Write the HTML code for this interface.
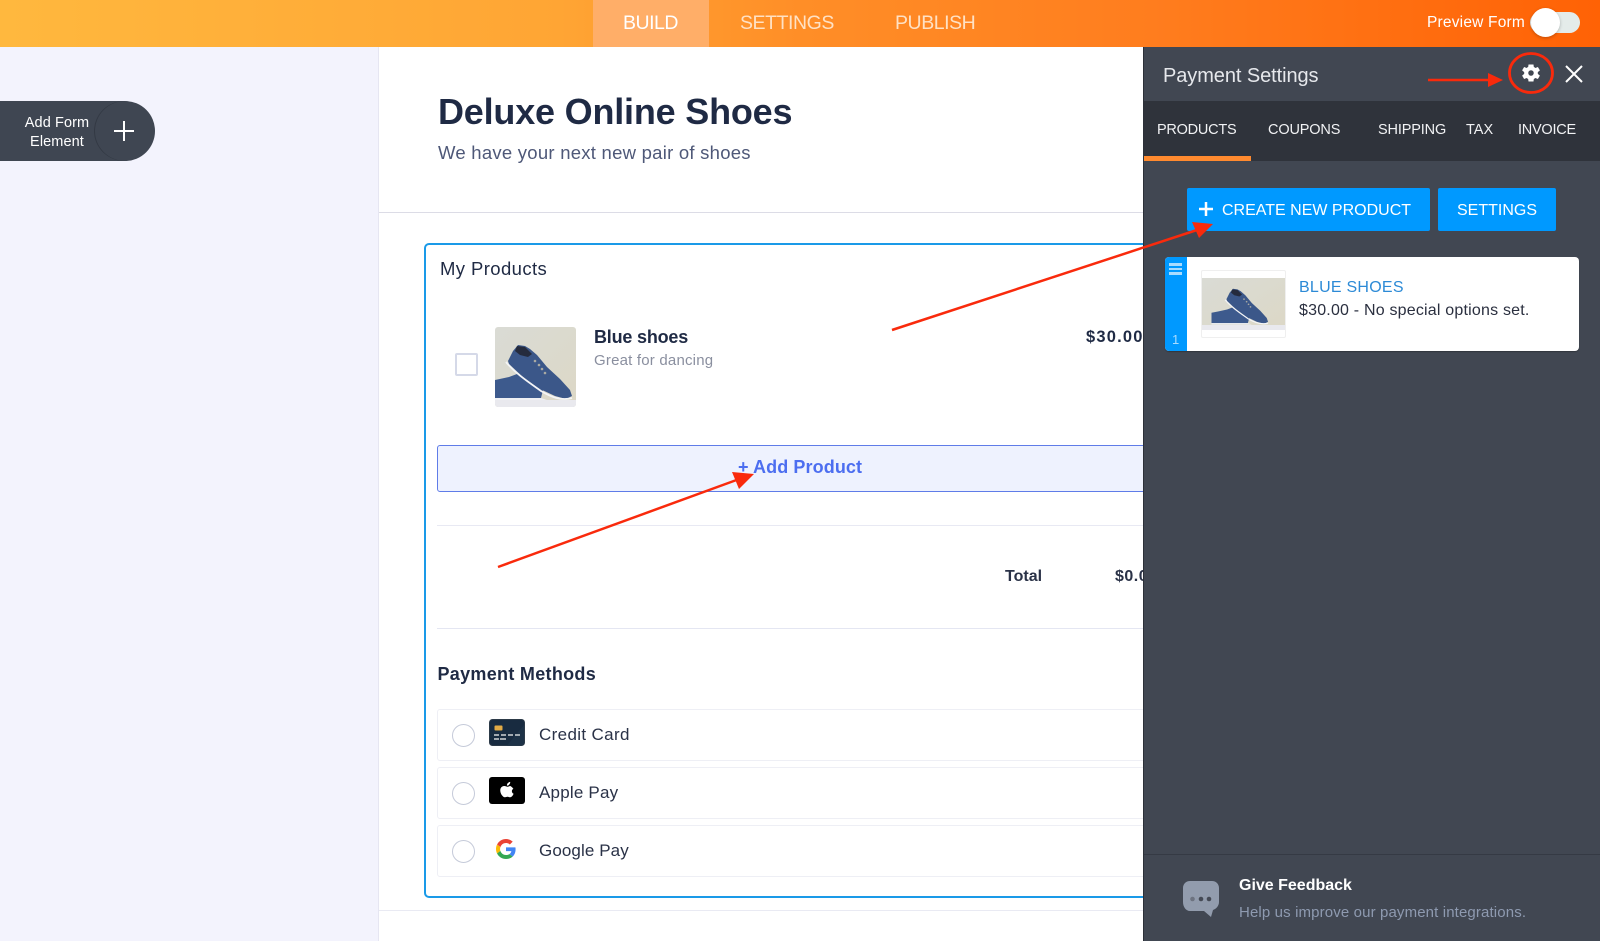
<!DOCTYPE html>
<html lang="en">
<head>
<meta charset="utf-8">
<title>Payment Settings</title>
<style>
html,body{margin:0;padding:0;width:1600px;height:941px;overflow:hidden;background:#f3f3fd;font-family:"Liberation Sans",sans-serif}
#page{position:relative;width:1600px;height:941px;overflow:hidden}
.a{position:absolute}
.t{position:absolute;white-space:nowrap;line-height:1}
svg{position:absolute;display:block}
</style>
</head>
<body>
<div id="page">
<svg width="0" height="0" style="position:absolute">
  <defs>
    <linearGradient id="wall" x1="0" y1="0" x2="1" y2="1"><stop offset="0" stop-color="#dadbd5"/><stop offset="1" stop-color="#dcd8c6"/></linearGradient>
    <g id="shoes">
      <path d="M-10 55 0 53 14 50 22 47 48 63 46 71-10 71Z" fill="#3d5a8d"/>
      <path d="M-10 71H46L52 73H-10Z" fill="#eef0f4"/>
      <path d="M13 34 18 24 23 18 30 19 35 22 42 28 52 40 65 52 75 63 77 69 71 72 60 69 45 62 30 52 14 37Z" fill="#3b5789"/>
      <path d="M22 19 30 20 37 27 33 30 25 28 20 24Z" fill="#252b3d"/>
      <path d="M11 35C20 46 32 54 46 64 56 70 66 74 77 71" fill="none" stroke="#f4f5f7" stroke-width="1.800"/>
      <g fill="#a9a9a3"><circle cx="40" cy="34" r="1.300"/><circle cx="44" cy="38" r="1.300"/><circle cx="47" cy="42" r="1.300"/><circle cx="50" cy="46" r="1.300"/></g>
    </g>
  </defs>
</svg>

<!-- top bar -->
<div class="a" style="left:0;top:0;width:1600px;height:47px;background:linear-gradient(90deg,#ffb83e 0%,#ffa534 35%,#ff8e27 50%,#ff7d1e 72%,#ff6205 100%)"></div>
<div class="a" style="left:593px;top:0;width:116px;height:47px;background:#ffae68"></div>
<div class="t" style="left:623px;top:14px;font-size:19.5px;color:#fff;letter-spacing:-.5px">BUILD</div>
<div class="t" style="left:740px;top:14px;font-size:19.5px;color:#ffe1c4;letter-spacing:-.45px">SETTINGS</div>
<div class="t" style="left:895px;top:14px;font-size:19.5px;color:#ffe1c4;letter-spacing:-.45px">PUBLISH</div>
<div class="t" style="left:1427px;top:15px;font-size:15.5px;color:#fff;letter-spacing:.2px">Preview Form</div>
<div class="a" style="left:1530px;top:12px;width:50px;height:21px;border-radius:11px;background:#e4ecea"></div>
<div class="a" style="left:1531px;top:8px;width:29px;height:29px;border-radius:50%;background:#fff;box-shadow:0 1px 3px rgba(0,0,0,.25)"></div>

<!-- left rail -->
<div class="a" style="left:0;top:101px;width:155px;height:60px;background:#3f4652;border-radius:0 30px 30px 0"></div>
<div class="a" style="left:94px;top:101px;width:61px;height:60px;border-radius:50%;box-shadow:inset 1px 0 0 #333944"></div>
<div class="t" style="left:0;top:114px;width:114px;text-align:center;font-size:14.5px;line-height:18.500px;color:#fff;letter-spacing:.1px">Add Form<br>Element</div>
<svg style="left:113px;top:120px" width="22" height="22" viewBox="0 0 22 22"><path d="M11 1V21M1 11H21" stroke="#fff" stroke-width="2"/></svg>

<!-- form sheet -->
<div class="a" style="left:379px;top:47px;width:770px;height:894px;background:#fff;box-shadow:-1px 0 0 #e6e6f2"></div>
<div class="t" style="left:438px;top:94px;font-size:36px;font-weight:bold;color:#1f2a44;letter-spacing:-.2px">Deluxe Online Shoes</div>
<div class="t" style="left:438px;top:144px;font-size:18.5px;color:#4e5878;letter-spacing:.25px">We have your next new pair of shoes</div>
<div class="a" style="left:379px;top:212px;width:770px;height:1px;background:#dcdce6"></div>

<div class="a" style="left:424px;top:243px;width:800px;height:655px;box-sizing:border-box;border:2px solid #1a9ae8;border-radius:5px"></div>
<div class="t" style="left:440px;top:260px;font-size:18.500px;color:#1f2a44;letter-spacing:.4px">My Products</div>

<div class="a" style="left:455px;top:353px;width:23px;height:23px;box-sizing:border-box;border:2px solid #d5d9e8;border-radius:2px"></div>
<svg style="left:495px;top:327px;border-radius:3px" width="81" height="80" viewBox="0 0 81 80">
  <rect width="81" height="80" fill="url(#wall)"/><rect y="73" width="81" height="7" fill="#e9e9ee"/><use href="#shoes"/>
</svg>
<div class="t" style="left:594px;top:328px;font-size:18px;font-weight:bold;color:#1f2a44;letter-spacing:-.2px">Blue shoes</div>
<div class="t" style="left:594px;top:353px;font-size:15px;color:#8a8f9f;letter-spacing:.2px">Great for dancing</div>
<div class="t" style="left:1086px;top:329px;font-size:16.5px;font-weight:bold;color:#1f2a44;letter-spacing:1.2px">$30.00</div>

<div class="a" style="left:437px;top:445px;width:800px;height:47px;box-sizing:border-box;background:#eef2fe;border:1px solid #5f7ce8;border-radius:3px"></div>
<div class="t" style="left:738px;top:458px;font-size:18px;font-weight:bold;color:#4c6ef0;letter-spacing:.1px">+ Add Product</div>

<div class="a" style="left:437px;top:525px;width:720px;height:1px;background:#e8e9f3"></div>
<div class="t" style="left:1005px;top:569px;font-size:16px;font-weight:bold;color:#2a3247">Total</div>
<div class="t" style="left:1115px;top:569px;font-size:16px;font-weight:bold;color:#2a3247;letter-spacing:.5px">$0.00</div>
<div class="a" style="left:437px;top:628px;width:720px;height:1px;background:#e4e6f2"></div>
<div class="t" style="left:437.500px;top:665px;font-size:18px;font-weight:bold;color:#1f2a44;letter-spacing:.3px">Payment Methods</div>

<div class="a" style="left:437px;top:709px;width:760px;height:52px;box-sizing:border-box;border:1px solid #eeeff5;border-radius:3px"></div>
<div class="a" style="left:437px;top:767px;width:760px;height:52px;box-sizing:border-box;border:1px solid #eeeff5;border-radius:3px"></div>
<div class="a" style="left:437px;top:825px;width:760px;height:52px;box-sizing:border-box;border:1px solid #eeeff5;border-radius:3px"></div>
<div class="a" style="left:451.500px;top:724px;width:23px;height:23px;box-sizing:border-box;border:1.500px solid #c5cad9;border-radius:50%"></div>
<div class="a" style="left:451.500px;top:782px;width:23px;height:23px;box-sizing:border-box;border:1.500px solid #c5cad9;border-radius:50%"></div>
<div class="a" style="left:451.500px;top:840px;width:23px;height:23px;box-sizing:border-box;border:1.500px solid #c5cad9;border-radius:50%"></div>

<svg style="left:489px;top:719px" width="36" height="27" viewBox="0 0 36 27">
  <rect x=".5" y=".5" width="35" height="26" rx="3" fill="#182b40" stroke="#2c3a48"/>
  <path d="M18 26.500 35 6V23.500a3 3 0 0 1-3 3Z" fill="#1d3247"/>
  <rect x="5.500" y="6.500" width="8" height="5" rx="1" fill="#e2ab46"/>
  <path d="M5 16H10M12 16H17M19 16H24M26 16H31" stroke="#cfd3d6" stroke-width="1.500"/>
  <path d="M5 20H10M11 20H17" stroke="#cfd3d6" stroke-width="1.500"/>
</svg>
<svg style="left:489px;top:777px" width="36" height="27" viewBox="0 0 36 27">
  <rect width="36" height="27" rx="3" fill="#000"/>
  <path d="M20.300 7.500c.8-.9 1-1.800.9-2.600-1 .1-1.900.6-2.500 1.400-.6.700-.9 1.600-.7 2.300 1 .1 1.700-.4 2.300-1.100Z" fill="#fff"/>
  <path d="M21.800 9c-1.400-.1-2.500.8-3.300.8-.8 0-1.900-.8-3.100-.8-1.600 0-3.200 1-3.800 2.400-1 2.600.3 5.900 1.900 7.500.8.900 1.500 1.500 2.500 1.400s1.300-.5 2.500-.5 1.500.5 2.600.5 1.800-.9 2.500-1.700c.6-.8.9-1.500 1-1.800-1.900-.8-2.600-3.500-.2-5-.9-1.200-2.300-2.700-3.600-2.800Z" fill="#fff"/>
</svg>
<svg style="left:496px;top:839px" width="20" height="20" viewBox="0 0 48 48">
  <path fill="#EA4335" d="M24 9.500c3.500 0 6.700 1.200 9.200 3.600l6.900-6.900C35.900 2.400 30.500 0 24 0 14.600 0 6.500 5.400 2.600 13.200l8 6.200C12.400 13.700 17.700 9.500 24 9.500z"/>
  <path fill="#4285F4" d="M47 24.500c0-1.600-.1-3.100-.4-4.500H24v9h12.900c-.6 3-2.200 5.500-4.700 7.200l7.700 6C44.400 38.100 47 31.900 47 24.500z"/>
  <path fill="#FBBC05" d="M10.500 28.600c-.5-1.500-.8-3-.8-4.600s.3-3.200.8-4.600l-8-6.200C.9 16.500 0 20.100 0 24s.9 7.500 2.600 10.800l7.900-6.200z"/>
  <path fill="#34A853" d="M24 48c6.500 0 11.900-2.100 15.900-5.800l-7.700-6c-2.100 1.400-4.900 2.300-8.200 2.300-6.300 0-11.600-4.200-13.500-9.900l-8 6.200C6.500 42.600 14.600 48 24 48z"/>
</svg>
<div class="t" style="left:539px;top:726px;font-size:17px;color:#2a3247;letter-spacing:.35px">Credit Card</div>
<div class="t" style="left:539px;top:784px;font-size:17px;color:#2a3247;letter-spacing:.2px">Apple Pay</div>
<div class="t" style="left:539px;top:842px;font-size:17px;color:#2a3247;letter-spacing:.1px">Google Pay</div>
<div class="a" style="left:379px;top:910px;width:770px;height:1px;background:#e9eaf3"></div>

<!-- right panel -->
<div class="a" style="left:1144px;top:47px;width:456px;height:894px;background:#414752;box-shadow:-1px 0 0 #2c3038"></div>
<div class="t" style="left:1163px;top:66px;font-size:20px;color:#e6e8ec;letter-spacing:-.08px">Payment Settings</div>
<svg style="left:1520px;top:62px" width="22" height="22" viewBox="0 0 24 24"><path fill="#fff" fill-rule="evenodd" d="M19.400 13a7.500 7.500 0 0 0 0-2l2.300-1.800-2.200-3.800-2.700 1.100a7.500 7.500 0 0 0-1.700-1L14.700 2.700H9.300l-.4 2.800a7.500 7.500 0 0 0-1.700 1L4.500 5.400 2.300 9.200 4.600 11a7.500 7.500 0 0 0 0 2l-2.300 1.800 2.200 3.800 2.700-1.100c.5.400 1.100.7 1.700 1l.4 2.800h5.400l.4-2.800c.6-.3 1.200-.6 1.700-1l2.700 1.100 2.200-3.800ZM12 15a3 3 0 1 1 0-6 3 3 0 0 1 0 6Z"/></svg>
<svg style="left:1564px;top:64px" width="20" height="20" viewBox="0 0 20 20"><path d="M2 2 18 18M18 2 2 18" stroke="#fff" stroke-width="2"/></svg>

<div class="a" style="left:1144px;top:101px;width:456px;height:60px;background:#2f333b"></div>
<div class="a" style="left:1144px;top:156px;width:107px;height:5px;background:#ff8a2f"></div>
<div class="t" style="left:1157px;top:123px;font-size:14.500px;color:#f1f2f4;letter-spacing:-.25px">PRODUCTS</div>
<div class="t" style="left:1268px;top:123px;font-size:14.500px;color:#f1f2f4;letter-spacing:-.15px">COUPONS</div>
<div class="t" style="left:1378px;top:123px;font-size:14.500px;color:#f1f2f4;letter-spacing:-.15px">SHIPPING</div>
<div class="t" style="left:1466px;top:123px;font-size:14.500px;color:#f1f2f4">TAX</div>
<div class="t" style="left:1518px;top:123px;font-size:14.500px;color:#f1f2f4;letter-spacing:-.25px">INVOICE</div>

<div class="a" style="left:1187px;top:188px;width:243px;height:43px;background:#0099ff;border-radius:2px"></div>
<svg style="left:1198px;top:201px" width="16" height="16" viewBox="0 0 16 16"><path d="M8 1V15M1 8H15" stroke="#fff" stroke-width="2.500"/></svg>
<div class="t" style="left:1222px;top:203px;font-size:16px;color:#fff">CREATE NEW PRODUCT</div>
<div class="a" style="left:1438px;top:188px;width:118px;height:43px;background:#0099ff;border-radius:2px"></div>
<div class="t" style="left:1457px;top:203px;font-size:16px;color:#fff">SETTINGS</div>

<div class="a" style="left:1165px;top:257px;width:414px;height:94px;background:#fff;border-radius:4px;overflow:hidden;box-shadow:0 1px 1px rgba(0,0,0,.25)">
  <div class="a" style="left:0;top:0;width:22px;height:94px;background:#0099ff"></div>
  <div class="a" style="left:4px;top:6px;width:13px;height:2.500px;background:#a9dcff"></div>
  <div class="a" style="left:4px;top:10.500px;width:13px;height:2.500px;background:#a9dcff"></div>
  <div class="a" style="left:4px;top:15px;width:13px;height:2.500px;background:#a9dcff"></div>
  <div class="t" style="left:7px;top:76px;font-size:13px;color:#a9dcff">1</div>
</div>
<div class="a" style="left:1201px;top:270px;width:85px;height:68px;box-sizing:border-box;border:1px solid #efefef;border-radius:2px;background:#fff"></div>
<svg style="left:1202px;top:278px" width="83" height="52" viewBox="0 0 83 52">
  <rect width="83" height="52" fill="url(#wall)"/><rect y="47" width="83" height="5" fill="#e9e9ee"/>
  <g transform="translate(16 -1) scale(.65)"><use href="#shoes"/></g>
</svg>
<div class="t" style="left:1299px;top:280px;font-size:16px;color:#2c8ad6;letter-spacing:.25px">BLUE SHOES</div>
<div class="t" style="left:1299px;top:302.500px;font-size:16px;color:#2a2f3f;letter-spacing:.2px">$30.00 - No special options set.</div>

<div class="a" style="left:1144px;top:854px;width:456px;height:1px;background:#353a44"></div>
<svg style="left:1182px;top:880px" width="38" height="38" viewBox="0 0 38 38">
  <path d="M8 1H30C34 1 37 4 37 8V22C37 26 34 29 31 30L29 37 22 31H8C4 31 1 27 1 22V8C1 4 4 1 8 1Z" fill="#929cad"/>
  <circle cx="10.500" cy="19" r="2.300" fill="#6d7380"/><circle cx="19" cy="19" r="2.300" fill="#454a55"/><circle cx="27" cy="19" r="2.300" fill="#454a55"/>
</svg>
<div class="t" style="left:1239px;top:878px;font-size:16px;font-weight:bold;color:#fff">Give Feedback</div>
<div class="t" style="left:1239px;top:905px;font-size:15px;color:#8e9ab0;letter-spacing:.13px">Help us improve our payment integrations.</div>

<!-- annotations -->
<svg style="left:0;top:0" width="1600" height="941" viewBox="0 0 1600 941">
  <g fill="none" stroke="#f92a0c">
    <path d="M498 567 742 478" stroke-width="2.500"/>
    <path d="M892 330 1200 229" stroke-width="2.500"/>
    <path d="M1428 80H1492" stroke-width="2.500"/>
    <ellipse cx="1531" cy="73" rx="21.500" ry="19.500" stroke-width="2.800"/>
  </g>
  <g fill="#f92a0c">
    <path d="M754 474 732 472 739 489Z"/>
    <path d="M1213 224 1192 222 1199 238Z"/>
    <path d="M1503 80 1488 73V87Z"/>
  </g>
</svg>
</div>
</body>
</html>
